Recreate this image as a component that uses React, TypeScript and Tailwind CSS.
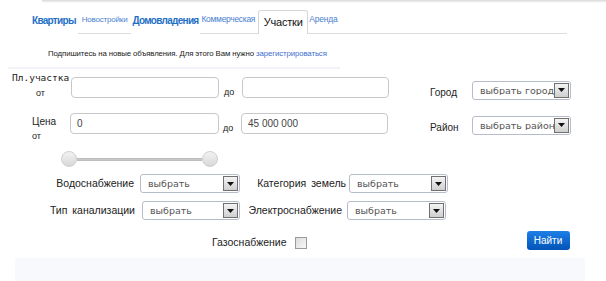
function Select({ text, w }: { text: string; w: string }) {
  return (
    <div className={`${w} h-[19px] flex items-center border border-[#b7bccb] rounded-[3px] bg-white pl-[7px] pr-[1px] overflow-hidden`}>
      <span className="flex-1 overflow-hidden whitespace-nowrap text-[9.5px] text-[#555] font-['DejaVu_Sans',sans-serif] leading-none">{text}</span>
      <span className="w-[15px] h-[15px] shrink-0 flex items-center justify-center border border-[#707070] bg-gradient-to-b from-[#f4f4f4] to-[#cfcfcf]">
        <svg width="7" height="4" viewBox="0 0 7 4"><path d="M0 0h7L3.5 4z" fill="#111" /></svg>
      </span>
    </div>
  )
}

function Input({ value, w }: { value?: string; w: string }) {
  return (
    <div className={`${w} h-[21px] border border-[#c8c8c8] rounded-[4px] bg-white flex items-center pl-[6px] text-[10px] text-[#444]`}>
      {value}
    </div>
  )
}

export default function App() {
  return (
    <div className="w-[606px] h-[281px] bg-white relative overflow-hidden font-['Liberation_Sans',Arial,sans-serif] text-[#222]">
      {/* top shadow */}
      <div className="ml-[42px] h-[3px] bg-gradient-to-b from-[#d8d8d8] to-white" />

      {/* tabs */}
      <div className="flex items-end h-[31px] pl-[32px]">
        <span className="text-[10px] font-bold text-[#1e6fc4] tracking-[-0.7px] pb-[6px]">Квартиры</span>
        <span className="ml-[2px] px-[4px] text-[8px] text-[#4a7fd0] border-b border-[#ddd] pb-[7px] tracking-[-0.2px]">Новостройки</span>
        <span className="ml-[1px] text-[10px] font-bold text-[#1e6fc4] tracking-[-0.7px] pb-[6px]">Домовладения</span>
        <span className="ml-[2px] pl-[1px] pr-[3px] text-[8.5px] text-[#4a7fd0] border-b border-[#ddd] pb-[7px] tracking-[-0.3px]">Коммерческая</span>
        <span className="w-[50px] h-[24px] border border-b-0 border-[#d6d6d6] rounded-t-[3px] flex items-center justify-center text-[11px] text-[#111] tracking-[-0.2px] bg-white">Участки</span>
        <span className="w-[259px] border-b border-[#ddd] pb-[7px] text-[8.5px] text-[#4a7fd0] pl-[1px] tracking-[-0.2px]">Аренда</span>
      </div>

      {/* subscribe */}
      <div className="pl-[48px] mt-[16px] text-[7.8px] text-[#222] leading-none tracking-[-0.1px]">
        Подпишитесь на новые объявления. Для этого Вам нужно <span className="text-[#3d6fd0]">зарегистрироваться</span>
      </div>
      <div className="ml-[8px] mt-[9px] w-[332px] h-[2px] bg-[#f1f3f8]" />

      {/* form top */}
      <div className="flex mt-[8px]">
        <div className="flex flex-col w-[400px]">
          <div className="flex items-start">
            <div className="w-[71px] pl-[12px] -mt-[5px]">
              <div className="font-['DejaVu_Sans_Mono',monospace] text-[9.5px] leading-[12px] text-[#222]">Пл.участка</div>
              <div className="pl-[24px] text-[9px] leading-[12px] mt-[3px]">от</div>
            </div>
            <Input w="w-[148px]" />
            <span className="w-[23px] pl-[5px] pt-[9px] text-[9px]">до</span>
            <Input w="w-[147px]" />
          </div>
          <div className="flex items-start mt-[14px]">
            <div className="w-[70px] pl-[32px] pt-[2px]">
              <div className="text-[10px] leading-[13px]">Цена</div>
              <div className="text-[9px] leading-[12px] mt-[2px]">от</div>
            </div>
            <Input w="w-[149px]" value="0" />
            <span className="w-[22px] pl-[4px] pt-[9px] text-[9px]">до</span>
            <Input w="w-[147px]" value="45 000 000" />
          </div>
          {/* slider */}
          <div className="ml-[61px] mt-[9px] w-[157px] h-[16px] flex items-center">
            <span className="w-[16px] h-[16px] rounded-full bg-gradient-to-b from-[#f2f2f2] to-[#d8d8d8] border border-[#cfcfcf]" />
            <span className="flex-1 h-[3px] bg-[#c9c9c9] border-y border-[#bdbdbd]" />
            <span className="w-[16px] h-[16px] rounded-full bg-gradient-to-b from-[#f2f2f2] to-[#d8d8d8] border border-[#cfcfcf]" />
          </div>
        </div>
        <div className="flex flex-col ml-[30px] mt-[4px]">
          <div className="flex items-center">
            <span className="w-[42px] text-[10px] pt-[4px]">Город</span>
            <Select text="выбрать город" w="w-[99px]" />
          </div>
          <div className="flex items-center mt-[16px]">
            <span className="w-[42px] text-[10px] pt-[4px]">Район</span>
            <Select text="выбрать район" w="w-[99px]" />
          </div>
        </div>
      </div>

      {/* selects */}
      <div className="flex items-center mt-[7px] text-[10.5px]">
        <span className="w-[134px] text-right">Водоснабжение</span>
        <div className="ml-[6px]"><Select text="выбрать" w="w-[100px]" /></div>
        <span className="w-[106px] text-right [word-spacing:2px]">Категория земель</span>
        <div className="ml-[3px]"><Select text="выбрать" w="w-[99px]" /></div>
      </div>
      <div className="flex items-center mt-[8px] text-[10.5px]">
        <span className="w-[135px] text-right [word-spacing:2px]">Тип канализации</span>
        <div className="ml-[7px]"><Select text="выбрать" w="w-[98px]" /></div>
        <span className="w-[102px] text-right">Электроснабжение</span>
        <div className="ml-[5px]"><Select text="выбрать" w="w-[99px]" /></div>
      </div>
      <div className="flex items-center mt-[9px]">
        <span className="ml-[212px] text-[10.5px] mt-[6px]">Газоснабжение</span>
        <span className="ml-[8px] mt-[6px] w-[12px] h-[12px] border border-[#9a9a9a] bg-gradient-to-br from-[#dcdcdc] to-[#f8f8f8]" />
        <span className="ml-[220px] w-[43px] h-[19px] rounded-[3px] bg-gradient-to-b from-[#1d80e6] to-[#0453b8] text-white text-[10px] flex items-center justify-center">Найти</span>
      </div>
      <div className="ml-[15px] mt-[7px] w-[570px] h-[30px] bg-[#f8f9fd]" />
    </div>
  )
}
